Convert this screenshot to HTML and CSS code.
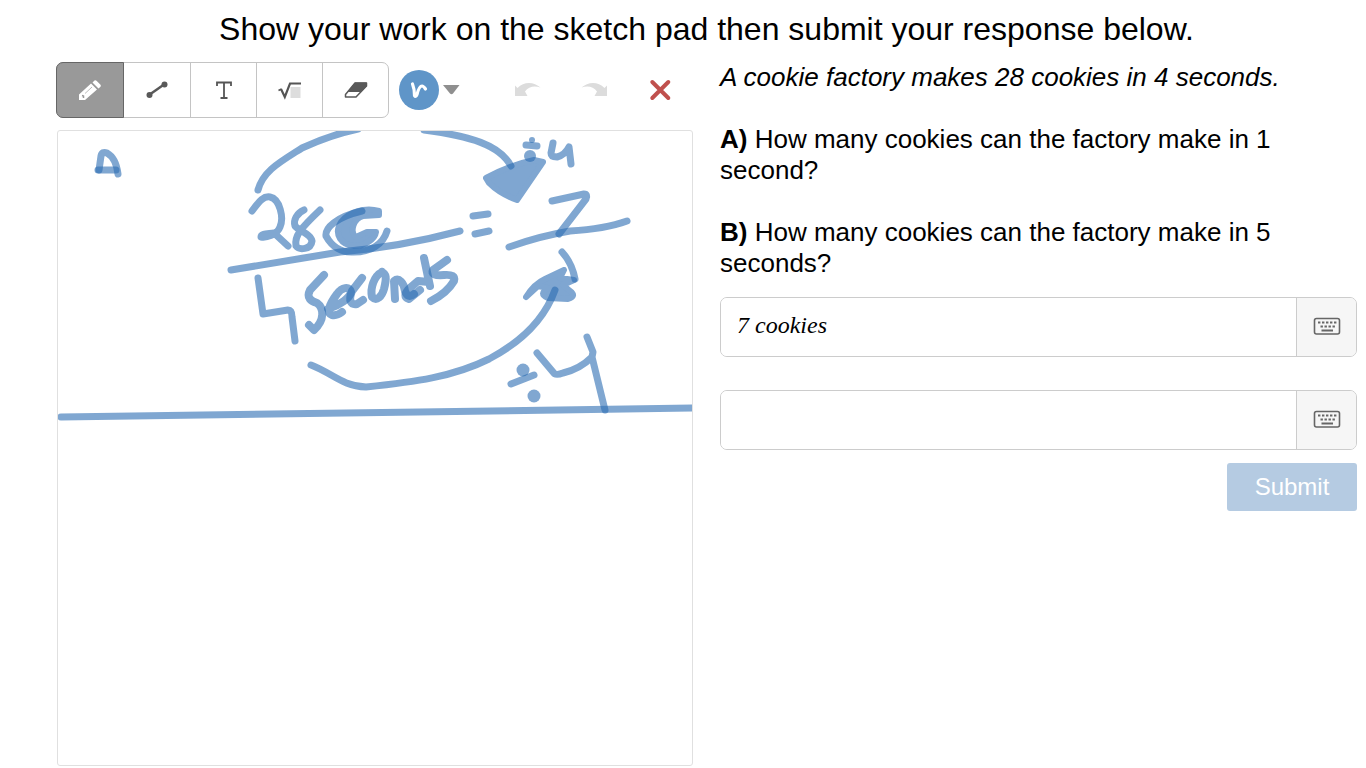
FILE: index.html
```html
<!DOCTYPE html>
<html lang="en">
  <head>
    <meta charset="UTF-8" />
    <meta name="viewport" content="width=device-width, initial-scale=1.0" />
    <title>Cookie factory</title>
    <link rel="stylesheet" href="styles.css">
  </head>

  <body>
    <h1 class="title">Show your work on the sketch pad then submit your response below.</h1>
    <main class="activity">
      <section class="sketch">
        <div class="toolbar">
          <div class="tools">
            <button type="button" class="tool current" aria-label="Pencil">
              <svg width="24" height="24" viewBox="0 0 24 24">
                <path fill="#fff" d="M1 16.500 13 5.500l6 6L7 22H1zM14.500 4.500l2-2q1-.6 2 .2l4 4q.8 1 0 2L20.500 10.500z" />
                <path fill="none" stroke="#bbb" d="M7 15.500l7-6.500" />
                <path fill="none" stroke="#999" stroke-width="1.500" d="M4 17.500l1.500.5v2" />
              </svg>
            </button>
            <button type="button" class="tool" aria-label="Line">
              <svg width="24" height="24" viewBox="0 0 24 24">
                <path stroke="#595959" stroke-width="2.500" d="M4 17 19 6.500" />
                <circle cx="4.500" cy="17" r="3" fill="#595959" />
                <circle cx="19.500" cy="6.500" r="3" fill="#595959" />
              </svg>
            </button>
            <button type="button" class="tool" aria-label="Text">
              <svg width="24" height="24" viewBox="0 0 24 24">
                <path fill="none" stroke="#555" stroke-width="1.800" d="M5 8V4.500h14V8M12 4.500v15.500M8.500 20h7" />
              </svg>
            </button>
            <button type="button" class="tool" aria-label="Math">
              <svg width="24" height="24" viewBox="0 0 24 24">
                <path fill="#ddd" d="M12.500 9h10v11h-10z" />
                <path fill="none" stroke="#555" stroke-width="1.600" d="M.5 12.500l3-1.500" />
                <path fill="none" stroke="#555" stroke-width="2.200" d="M3 11l3.800 8L12 5.500H23" />
              </svg>
            </button>
            <button type="button" class="tool" aria-label="Eraser">
              <svg width="24" height="24" viewBox="0 0 24 24">
                <path fill="#fff" stroke="#595959" stroke-width="1.500" stroke-linejoin="round" d="M11 5h11.500v3L12 19H1.500v-2.500z" />
                <path fill="#595959" d="M11 4.500h11.500v3.800L17 14H3.500z" />
              </svg>
            </button>
          </div>
          <button type="button" class="color" aria-label="Color">
            <svg width="62" height="40" viewBox="0 0 62 40">
              <circle cx="20" cy="20" r="20" fill="#5f95c8" />
              <path fill="none" stroke="#fff" stroke-width="3.200" stroke-linecap="round" stroke-linejoin="round" d="M13.500 14q2 5 2 11.500c1 1.500 2 .5 2.500-1 1-4 2.500-8.500 5-8.500 1.500 0 2.500 1.500 3.500 3" />
              <path fill="#8f8f8f" d="M44 15h16.500L54 23.500q-1.500 1.500-3 0z" />
            </svg>
          </button>
          <div class="history">
            <button type="button" class="action" aria-label="Undo">
              <svg width="26" height="24" viewBox="0 0 26 24">
                <path fill="#dcdcdc" d="M0 7.500l2.500 2.500C9 3 19 3.500 25.500 9.500c-6-2-12-1-15.500 4L12.500 18H0z" />
              </svg>
            </button>
            <button type="button" class="action" aria-label="Redo">
              <svg width="26" height="24" viewBox="0 0 26 24">
                <path fill="#dcdcdc" d="M26 7.500L23.500 10C17 3 7 3.500.5 9.500c6-2 12-1 15.500 4L13.500 18H26z" />
              </svg>
            </button>
            <button type="button" class="action" aria-label="Clear">
              <svg width="24" height="24" viewBox="0 0 24 24">
                <path stroke="#c0504d" stroke-width="4" stroke-linecap="round" d="M4.300 4l16 16M20.300 4l-16 16" />
              </svg>
            </button>
          </div>
        </div>

        <svg class="board" viewBox="58 131 634 634" role="img" aria-label="Sketch pad">
          <!-- A -->
          <path d="M98 170H116" />
          <path d="M99 170L101 156Q102 151 107 153Q116 158 118 174" />
          <!-- upper arrow -->
          <path d="M258 190C263 171 280 162 302 148Q330 135 358 129" />
          <path d="M424 130C470 136 500 145 511 166" />
          <path class="fill" d="M486 178Q510 165 534 160L543 162L517 200Q500 194 489 183Z" />
          <!-- 28c -->
          <path d="M252 211C260 200 264 196 270 197C280 199 284 218 280 227C277 235 266 238 261 237C261 233 269 234 274 233L288 246" />
          <path d="M304 210C297 213 293 220 295 226C299 231 311 234 312 241C311 250 299 250 296 246C294 236 301 228 320 210" />
          <path d="M362 211C336 217 325 228 326 236C332 247 342 253 354 252C370 252 383 245 387 231" />
          <path class="fill" d="M379 211C365 207 349 212 341 222C333 235 342 245 354 246C365 246 375 239 376 232L367 232L356 237C349 232 354 218 363 216L379 215Z" />
          <path d="M231 270L340 252Q400 247 460 231" />
          <path d="M473 216L488 214M475 234L489 231" />
          <!-- divided by 4 -->
          <path d="M526 145L537 146" />
          <circle cx="532" cy="140" r="3" />
          <circle cx="530" cy="156" r="6" />
          <path d="M553 143L551 153Q551 157 557 157Q565 155 569 147L571 164" />
          <!-- 7 -->
          <path d="M552 201L584 194Q588 194 586 199L559 234" />
          <path d="M509 247Q540 236 570 231Q605 229 627 221" />
          <!-- 4 seconds -->
          <path d="M258 278L263 314L288 310Q292 310 292 317L295 341" />
          <path class="bold" d="M324 275L310 290C306 298 311 301 317 303C324 308 325 320 314 330L309 325" />
          <path class="bold" d="M328 309C340 305 350 298 351 292C349 286 342 287 337 294C328 306 327 313 332 315Q337 316 342 312" />
          <path class="bold" d="M362 278L352 291C348 301 351 305 357 304L363 300" />
          <path class="bold" d="M382 272C374 276 370 288 372 297C377 302 382 296 384 289C387 277 386 274 382 272" />
          <path class="bold" d="M395 299L394 281C399 277 404 283 405 291Q408 299 414 294" />
          <path class="bold" d="M420 290L409 299Q401 296 411 287L418 281L429 282L424 258L430 286" />
          <path class="bold" d="M447 260L433 270Q430 276 444 275Q456 274 454 281Q447 293 431 301" />
          <!-- lower arrow -->
          <path d="M311 365C332 373 342 386 366 387C414 382 453 377 489 359Q540 332 555 290" />
          <path class="fill" d="M526 297Q534 284 545 279L564 270L560 278L574 280L563 285L570 291Q577 296 568 299L548 298Q538 294 548 288L538 286Z" />
          <path d="M562 252Q572 263 575 279" />
          <!-- divided by 4 -->
          <circle cx="523" cy="370" r="6.500" />
          <path d="M511 384L534 375" />
          <circle cx="534" cy="396" r="6.500" />
          <path d="M537 353L553 372Q555 376 563 373Q580 369 592 357L593 352L587 337M592 357L605 410" />
          <path d="M61 417L700 408" />
        </svg>
      </section>

      <form class="question">
        <div class="prompt">
          <p><em>A cookie factory makes 28 cookies in 4 seconds.</em></p>
          <p><strong>A)</strong> How many cookies can the factory make in 1 second?</p>
          <p><strong>B)</strong> How many cookies can the factory make in 5 seconds?</p>
        </div>
        <div class="answer">
          <input type="text" class="answer_text" aria-label="Answer A" value="7 cookies" />
          <button type="button" class="keypad" aria-label="Open keypad">
            <svg width="28" height="20" viewBox="0 0 28 20">
              <rect x="1.500" y="1.500" width="25" height="15.500" rx="2" fill="none" stroke="#666" stroke-width="1.600" />
              <path stroke="#666" stroke-width="2.200" d="M5 5.500h2.400M9 5.500h2.400M13 5.500h2.400M17 5.500h2.400M21 5.500h2.400M7.500 9.500h2.400M11.500 9.500h2.400M15.500 9.500h2.400M19.500 9.500h2.400M8.500 13.500h11.500" />
            </svg>
          </button>
        </div>
        <div class="answer">
          <input type="text" class="answer_text" aria-label="Answer B" />
          <button type="button" class="keypad" aria-label="Open keypad">
            <svg width="28" height="20" viewBox="0 0 28 20">
              <rect x="1.500" y="1.500" width="25" height="15.500" rx="2" fill="none" stroke="#666" stroke-width="1.600" />
              <path stroke="#666" stroke-width="2.200" d="M5 5.500h2.400M9 5.500h2.400M13 5.500h2.400M17 5.500h2.400M21 5.500h2.400M7.500 9.500h2.400M11.500 9.500h2.400M15.500 9.500h2.400M19.500 9.500h2.400M8.500 13.500h11.500" />
            </svg>
          </button>
        </div>
        <button type="submit" class="submit">Submit</button>
      </form>
    </main>
  </body>
</html>
```

FILE: styles.css
```css
* {
  margin: 0;
  padding: 0;
  box-sizing: border-box;
}

body {
  padding: 11px 9px 0 56px;
  background-color: #fff;
  color: #000;
  font-family: "Liberation Sans", Arial, sans-serif;
}

button {
  border: 0;
  background: none;
  font-family: inherit;
  cursor: pointer;
}

svg {
  display: block;
}

.title {
  font-size: 32px;
  line-height: 36px;
  font-weight: normal;
  text-align: center;
}

.activity {
  display: grid;
  grid-template-columns: 1fr 1fr;
  gap: 27px;
  padding-top: 15px;
}

/* sketch pad */
.toolbar {
  display: flex;
  align-items: center;
  height: 56px;
}

.tools {
  display: flex;
  height: 56px;
  border: 1px solid #c4c4c4;
  border-radius: 7px;
}

.tool {
  display: flex;
  align-items: center;
  justify-content: center;
  width: 66px;
  border-left: 1px solid #c4c4c4;
}

.tools .current {
  width: 68px;
  margin: -1px 0 -1px -1px;
  border: 1px solid #666;
  border-radius: 7px 0 0 7px;
  background-color: #999;
}

.current + .tool {
  border-left: 0;
}

.color {
  margin-left: 10px;
}

.history {
  display: flex;
  margin-left: auto;
}

.action {
  display: flex;
  align-items: center;
  justify-content: center;
  width: 66px;
  height: 56px;
}

.board {
  width: calc(100% - 1px);
  margin: 12px 0 0 1px;
  border: 1px solid #e0e0e0;
  border-radius: 3px;
}

.board path {
  fill: none;
  stroke: #2b6cb3;
  stroke-width: 7px;
  stroke-linecap: round;
  stroke-linejoin: round;
  opacity: 0.6;
}

.board .bold {
  stroke-width: 8px;
}

.board .fill {
  fill: #2b6cb3;
  stroke-width: 6px;
}

.board circle {
  fill: #2b6cb3;
  opacity: 0.6;
}

/* question */
.question {
  display: flex;
  flex-direction: column;
}

.prompt {
  display: flex;
  flex-direction: column;
  gap: 31px;
  margin-bottom: 18px;
  font-size: 26px;
  line-height: 31px;
}

.answer {
  display: flex;
  height: 60px;
  margin-bottom: 33px;
  border: 1px solid #ccc;
  border-radius: 7px;
  overflow: hidden;
}

.answer_text {
  flex: 1;
  min-width: 0;
  padding: 0 16px 4px;
  border: 0;
  outline: 0;
  font-family: "Liberation Serif", "Times New Roman", serif;
  font-size: 24px;
  font-style: italic;
}

.keypad {
  display: flex;
  align-items: center;
  justify-content: center;
  width: 60px;
  border-left: 1px solid #ccc;
  background-color: #f6f6f6;
}

.submit {
  align-self: flex-end;
  width: 130px;
  height: 48px;
  margin-top: -20px;
  border-radius: 3px;
  background-color: #b5cbe2;
  color: #fff;
  font-size: 24px;
}
```
